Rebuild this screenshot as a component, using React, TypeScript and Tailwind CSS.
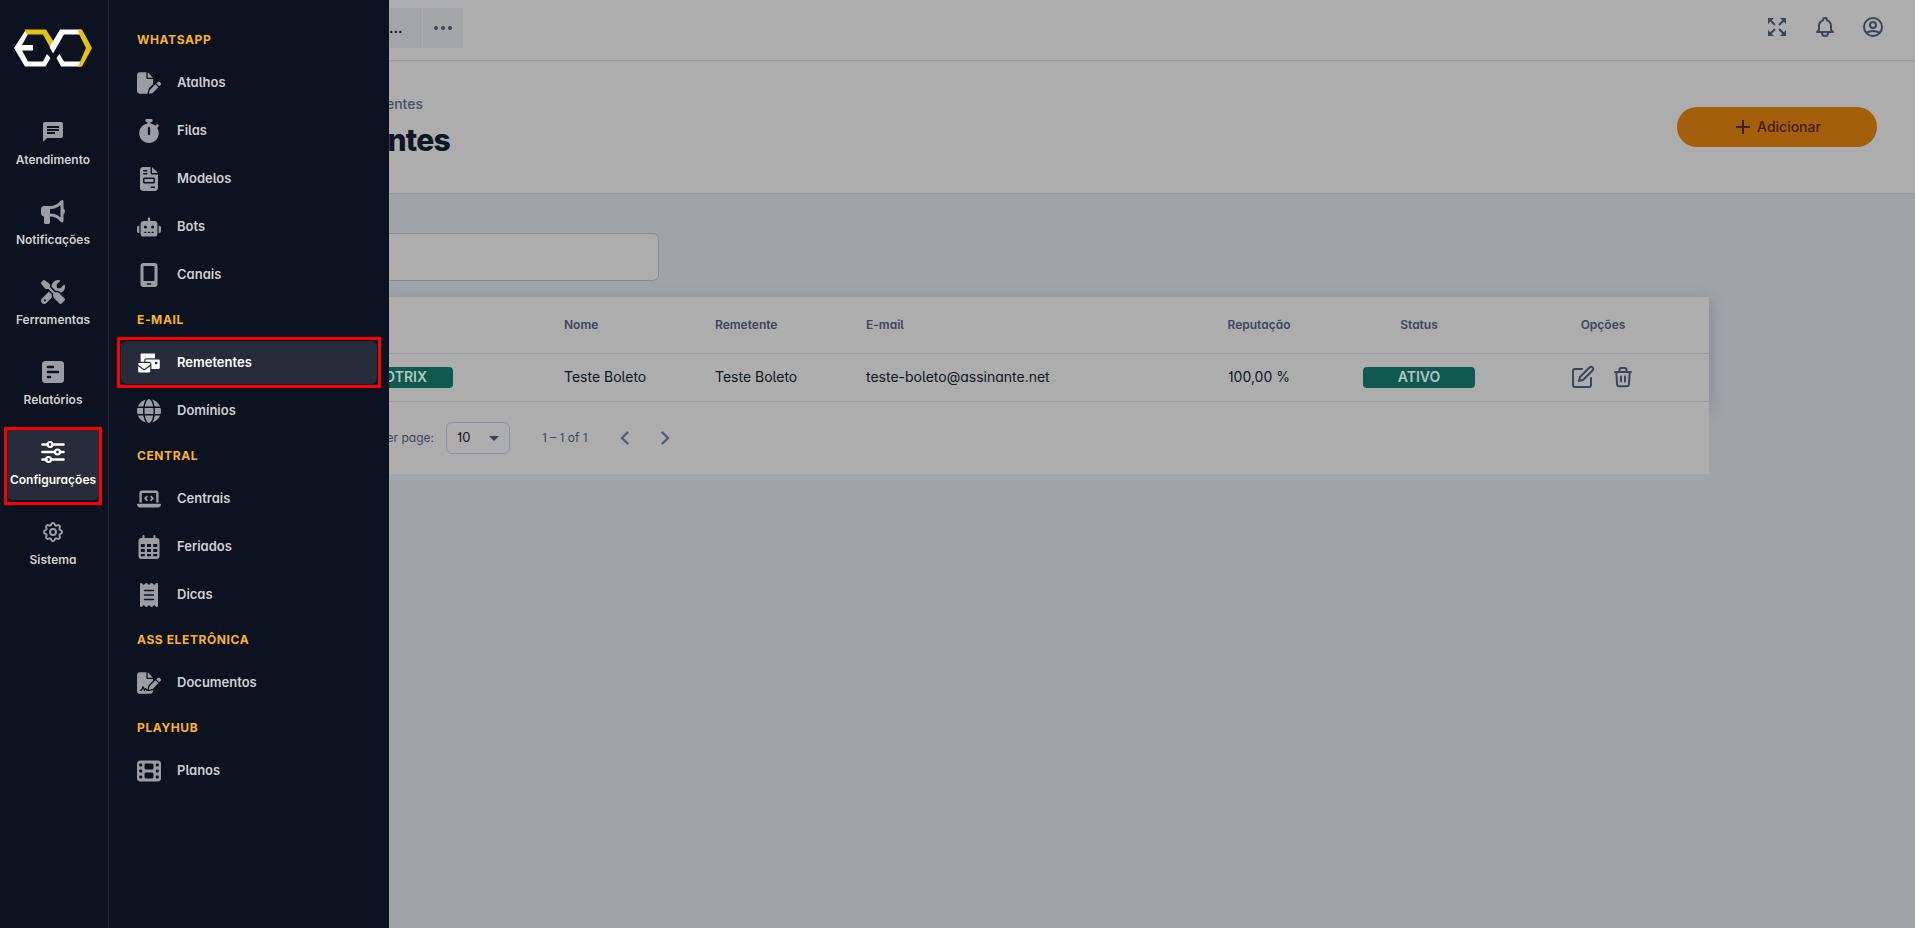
import { useState } from "react";
import type { ReactNode } from "react";
import type { IconType } from "react-icons";
import {
  FaBullhorn,
  FaFilePen,
  FaStopwatch,
  FaFileInvoice,
  FaRobot,
  FaGlobe,
  FaReceipt,
  FaFileSignature,
  FaFilm,
  FaLaptopCode,
  FaEnvelopesBulk,
  FaScrewdriverWrench,
} from "react-icons/fa6";
import {
  MdChat,
  MdChevronLeft,
  MdChevronRight,
  MdArrowDropDown,
} from "react-icons/md";
import { HiOutlineBell, HiOutlineUserCircle } from "react-icons/hi";

interface IconProps {
  className?: string;
}

interface MenuItem {
  label: string;
  icon: IconType | ((props: IconProps) => ReactNode);
}

interface MenuGroup {
  title: string;
  items: MenuItem[];
}

const Logo = () => (
  <svg viewBox="0 0 80 40" className="h-10 w-20" aria-label="EVO" role="img">
    <path d="M13 1.500 L1 20 L12 38.500 H32.500 L37.500 30 L34 26 L30 33.500 H15 L9 22.500 H20 V17 H9 L15 6 Z" fill="#fff" />
    <path d="M11.500 1.500 H33 L41.500 15 L38 21 L30 6.500 H14 Z" fill="#e5c30b" />
    <path d="M68 1.500 H47 L36.500 19 L40 25.500 L51 6.500 H68 Z M43.500 30 L48 38.500 H68 V33.500 H51 L46.500 26 Z" fill="#fff" />
    <path d="M66 1.500 H69 L79 20 L69 38.500 H65 L73 20 L65 4 Z" fill="#e5c30b" />
  </svg>
);

const ReportIcon = ({ className }: IconProps) => (
  <svg viewBox="0 0 24 24" className={className} fill="none">
    <rect x="1" y="1" width="22" height="22" rx="3.500" fill="currentColor" />
    <path d="M7 7h5M7 12h10M7 17h2" stroke="#0c121f" strokeWidth="2.600" strokeLinecap="round" />
  </svg>
);

const SlidersIcon = ({ className }: IconProps) => (
  <svg viewBox="0 0 24 24" className={className} fill="none" stroke="currentColor" strokeWidth="2.600" strokeLinecap="round">
    <path d="M1.500 4.500h5M11.500 4.500h11M1.500 12h12M19 12h3.500M1.500 19.500h4M10.500 19.500h12" />
    <circle cx="9" cy="4.500" r="2.500" strokeWidth="2.200" />
    <circle cx="16.500" cy="12" r="2.500" strokeWidth="2.200" />
    <circle cx="7.500" cy="19.500" r="2.500" strokeWidth="2.200" />
  </svg>
);

const GearIcon = ({ className }: IconProps) => (
  <svg viewBox="0 0 24 24" className={className} fill="none" stroke="currentColor" strokeWidth="2" strokeLinejoin="round">
    <path d="M10.300 4.300c.4-1.700 2.900-1.700 3.400 0a1.700 1.700 0 0 0 2.600 1.100c1.500-.9 3.300.8 2.400 2.400a1.700 1.700 0 0 0 1 2.500c1.800.4 1.800 2.900 0 3.400a1.700 1.700 0 0 0-1 2.600c.9 1.500-.9 3.300-2.400 2.400a1.700 1.700 0 0 0-2.600 1c-.5 1.800-3 1.800-3.400 0a1.700 1.700 0 0 0-2.600-1c-1.500.9-3.300-.9-2.400-2.400a1.700 1.700 0 0 0-1-2.600c-1.800-.5-1.800-3 0-3.400a1.700 1.700 0 0 0 1-2.600c-.9-1.500.9-3.300 2.400-2.400a1.700 1.700 0 0 0 2.600-1z" />
    <circle cx="12" cy="12" r="3" />
  </svg>
);

const PhoneIcon = ({ className }: IconProps) => (
  <svg viewBox="0 0 24 24" className={className} fill="currentColor" fillRule="evenodd">
    <path d="M6.500 0h11A3 3 0 0 1 20.500 3v18a3 3 0 0 1-3 3h-11a3 3 0 0 1-3-3V3a3 3 0 0 1 3-3zM6.500 3v15h11V3zM10.500 20.200a.8.8 0 0 0 0 1.600h3a.8.8 0 0 0 0-1.600z" />
  </svg>
);

const CalendarIcon = ({ className }: IconProps) => (
  <svg viewBox="0 0 24 24" className={className} fill="currentColor" fillRule="evenodd">
    <path d="M6.500 0a1 1 0 0 1 1 1v2h9V1a1 1 0 0 1 2 0v2h1A3 3 0 0 1 22.500 6v15a3 3 0 0 1-3 3h-15a3 3 0 0 1-3-3V6a3 3 0 0 1 3-3h1V1a1 1 0 0 1 1-1zM3.800 9v3h4V9zM10 9v3h4V9zM16.200 9v3h4V9zM3.800 14v3h4v-3zM10 14v3h4v-3zM16.200 14v3h4v-3zM3.800 19v2.200h4V19zM10 19v2.200h4V19zM16.200 19v2.200h4V19z" />
  </svg>
);

const ExpandIcon = ({ className }: IconProps) => (
  <svg viewBox="0 0 20 20" className={className} fill="none" stroke="currentColor" strokeWidth="2">
    <path d="M3 3l5 5M17 3l-5 5M3 17l5-5M17 17l-5-5" />
    <path d="M1 1h6L1 7zM19 1v6l-6-6zM1 19v-6l6 6zM19 19h-6l6-6z" fill="currentColor" stroke="none" />
  </svg>
);

const EditIcon = ({ className }: IconProps) => (
  <svg viewBox="0 0 24 24" className={className} fill="none" stroke="currentColor" strokeWidth="2" strokeLinecap="round" strokeLinejoin="round">
    <path d="M11 4H4a2 2 0 0 0-2 2v14a2 2 0 0 0 2 2h14a2 2 0 0 0 2-2v-7" />
    <path d="M18.500 2.500a2.120 2.120 0 0 1 3 3L12 15l-4 1 1-4z" />
  </svg>
);

const TrashIcon = ({ className }: IconProps) => (
  <svg viewBox="0 0 24 24" className={className} fill="none" stroke="currentColor" strokeWidth="2" strokeLinecap="round" strokeLinejoin="round">
    <path d="M4 7h16M8.500 7V4.500a1.500 1.500 0 0 1 1.500-1.500h4a1.500 1.500 0 0 1 1.500 1.500V7" />
    <path d="M5.300 7l.8 12.500a2 2 0 0 0 2 1.700h7.800a2 2 0 0 0 2-1.700L18.700 7M10 11.500v5M14 11.500v5" />
  </svg>
);

const mainMenu: MenuItem[] = [
  { label: "Atendimento", icon: MdChat },
  { label: "Notificações", icon: FaBullhorn },
  { label: "Ferramentas", icon: FaScrewdriverWrench },
  { label: "Relatórios", icon: ReportIcon },
  { label: "Configurações", icon: SlidersIcon },
  { label: "Sistema", icon: GearIcon },
];

const groups: MenuGroup[] = [
  {
    title: "WHATSAPP",
    items: [
      { label: "Atalhos", icon: FaFilePen },
      { label: "Filas", icon: FaStopwatch },
      { label: "Modelos", icon: FaFileInvoice },
      { label: "Bots", icon: FaRobot },
      { label: "Canais", icon: PhoneIcon },
    ],
  },
  {
    title: "E-MAIL",
    items: [
      { label: "Remetentes", icon: FaEnvelopesBulk },
      { label: "Domínios", icon: FaGlobe },
    ],
  },
  {
    title: "CENTRAL",
    items: [
      { label: "Centrais", icon: FaLaptopCode },
      { label: "Feriados", icon: CalendarIcon },
      { label: "Dicas", icon: FaReceipt },
    ],
  },
  { title: "ASS ELETRÔNICA", items: [{ label: "Documentos", icon: FaFileSignature }] },
  { title: "PLAYHUB", items: [{ label: "Planos", icon: FaFilm }] },
];

const MainNav = () => (
  <nav className="flex w-[109px] shrink-0 flex-col border-r border-[#242938] pr-0.5" aria-label="Principal">
    <a href="#inicio" className="mt-7 mb-[39px] flex justify-center">
      <Logo />
    </a>
    {mainMenu.map(({ label, icon: Icon }) => {
      const active = label === "Configurações";
      return (
        <a
          key={label}
          href={"#" + label}
          className={
            active
              ? "mx-1 mb-0.5 h-[78px] border-3 border-[#ff0000] pb-0.5 text-white"
              : "mx-1 mb-0.5 h-[78px] border-3 border-transparent pb-0.5 text-[#9b9da5]"
          }
        >
          <span
            className={
              active
                ? "flex h-full flex-col items-center gap-2 rounded-b-md bg-[#272b3a] pt-[10px]"
                : "flex h-full flex-col items-center gap-2 pt-[10px]"
            }
          >
            <Icon className="size-6" />
            <span className={active ? "text-xs font-semibold" : "text-xs font-semibold text-[#cfd0d3]"}>{label}</span>
          </span>
        </a>
      );
    })}
  </nav>
);

const SubNav = () => (
  <nav className="flex-1 px-2 pt-5" aria-label="Configurações">
    {groups.map((group) => (
      <section key={group.title} className="pb-px">
        <h2 className="flex h-[39px] items-center px-5 text-xs font-bold tracking-wider text-[#fbb31e]">
          {group.title}
        </h2>
        {group.items.map(({ label, icon: Icon }) => {
          if (label === "Remetentes") {
            return (
              <a key={label} href={"#" + label} className="-mt-0.5 -mb-px block h-[51px] border-3 border-[#ff0000] p-px">
                <span className="flex h-full items-center gap-4 rounded-md bg-[#272b3a] px-4 text-white">
                  <Icon className="size-6" />
                  <span className="text-[13px] font-semibold">{label}</span>
                </span>
              </a>
            );
          }
          return (
            <a key={label} href={"#" + label} className="flex h-12 items-center gap-4 px-5 text-[#9b9da5]">
              <Icon className="size-6" />
              <span className="text-[13px] font-semibold text-[#cfd0d3]">{label}</span>
            </a>
          );
        })}
      </section>
    ))}
  </nav>
);

const Header = () => (
  <header className="flex h-[61px] shrink-0 items-center border-b border-[#999a9b] pr-[30px] shadow-xs">
    <div className="-mt-1 flex gap-px">
      <button className="flex h-10 w-[33px] items-center bg-[#a3a5a7] text-sm font-semibold text-[#0f1624]">...</button>
      <button className="flex size-10 items-center justify-center gap-[3px] bg-[#a3a5a7]" aria-label="Mais">
        <span className="size-1 rounded-full bg-[#3c465a]" />
        <span className="size-1 rounded-full bg-[#3c465a]" />
        <span className="size-1 rounded-full bg-[#3c465a]" />
      </button>
    </div>
    <div className="-mt-1.5 ml-auto flex items-center gap-6 text-[#3c465a]">
      <button aria-label="Tela cheia" className="flex size-6 items-center justify-center">
        <ExpandIcon className="size-5" />
      </button>
      <button aria-label="Notificações">
        <HiOutlineBell className="size-6" />
      </button>
      <button aria-label="Conta">
        <HiOutlineUserCircle className="size-6" />
      </button>
    </div>
  </header>
);

const TitleBar = () => (
  <div className="flex h-[133px] shrink-0 items-center justify-between border-b border-[#93979d] pr-[38px]">
    <div>
      <p className="flex w-[34px] justify-end text-sm leading-5 font-medium text-[#465166]">entes</p>
      <h1 className="mt-1.5 flex w-[61px] justify-end text-3xl leading-10 font-extrabold tracking-tight text-[#0f1624]">
        ntes
      </h1>
    </div>
    <button className="flex h-10 w-[200px] items-center justify-center gap-1 rounded-full bg-[#a35f0a] text-sm font-medium text-[#4a1a0a]">
      <svg viewBox="0 0 20 20" className="size-5" stroke="currentColor" strokeWidth="2" aria-hidden="true">
        <path d="M10 3v14M3 10h14" />
      </svg>
      Adicionar
    </button>
  </div>
);

const SendersTable = () => {
  const [pageSize, setPageSize] = useState("10");

  return (
    <div className="mr-[206px]">
      <table className="w-full table-fixed bg-[#adadad] text-left text-sm text-[#0f1624] shadow-[0_5px_14px_0_rgba(80,80,100,0.45)]">
        <colgroup>
          <col className="w-[163px]" />
          <col className="w-[151px]" />
          <col className="w-[151px]" />
          <col />
          <col className="w-[120px]" />
          <col className="w-[200px]" />
          <col className="w-[190px]" />
        </colgroup>
        <thead>
          <tr className="h-14 border-b border-[#979aa3] text-xs text-[#3c465a]">
            <th />
            <th className="pl-3 font-semibold">Nome</th>
            <th className="pl-3 font-semibold">Remetente</th>
            <th className="pl-3 font-semibold">E-mail</th>
            <th className="text-center font-semibold">Reputação</th>
            <th className="text-center font-semibold">Status</th>
            <th className="pr-[22px] text-center font-semibold">Opções</th>
          </tr>
        </thead>
        <tbody>
          <tr className="h-12 border-b border-[#979aa3]">
            <td>
              <span className="flex h-[21px] w-16 items-center justify-end rounded-r-sm bg-[#0f594e] pr-[26px] font-semibold text-[#b9c4c1]">
                OTRIX
              </span>
            </td>
            <td className="pl-3">Teste Boleto</td>
            <td className="pl-3">Teste Boleto</td>
            <td className="pl-3">teste-boleto@assinante.net</td>
            <td className="text-center">100,00 %</td>
            <td>
              <span className="mx-auto flex h-[21px] w-28 items-center justify-center rounded-sm bg-[#0f594e] font-semibold text-[#b9c4c1]">
                ATIVO
              </span>
            </td>
            <td>
              <div className="flex items-center justify-center gap-4 pr-[22px] text-[#3c465a]">
                <button aria-label="Editar">
                  <EditIcon className="size-6" />
                </button>
                <button aria-label="Excluir">
                  <TrashIcon className="size-6" />
                </button>
              </div>
            </td>
          </tr>
        </tbody>
      </table>
      <div className="relative flex h-[72px] items-center bg-[#adadad] text-xs text-[#3c465a]">
        <label htmlFor="page-size" className="flex w-[45px] justify-end whitespace-nowrap">
          er page:
        </label>
        <div className="relative ml-3">
          <select
            id="page-size"
            value={pageSize}
            onChange={(e) => setPageSize(e.target.value)}
            className="h-8 w-16 appearance-none rounded-md border border-[#8b92a3] px-[10px] text-[13px] text-[#0f1624]"
          >
            <option>10</option>
            <option>25</option>
          </select>
          <MdArrowDropDown className="pointer-events-none absolute top-1 right-1 size-6" />
        </div>
        <span className="ml-8">1 – 1 of 1</span>
        <button aria-label="Página anterior" className="ml-6 text-[#526077]">
          <MdChevronLeft className="size-7" />
        </button>
        <button aria-label="Próxima página" className="ml-3 text-[#526077]">
          <MdChevronRight className="size-7" />
        </button>
      </div>
    </div>
  );
};

export default function App() {
  return (
    <div className="flex min-h-screen bg-[#adadad] font-['Inter',sans-serif]">
      <aside className="relative z-10 flex w-[389px] shrink-0 bg-[#0c121f] [font-feature-settings:'cv01','cv05','cv11']">
        <MainNav />
        <SubNav />
      </aside>
      <div className="flex min-w-0 flex-1 flex-col">
        <Header />
        <TitleBar />
        <main className="flex-1 bg-[#a0a4a7] pt-[39px] [font-feature-settings:'cv01','cv05','cv11']">
          <input
            type="text"
            aria-label="Pesquisar"
            className="mb-4 block h-12 w-[270px] rounded-r-md border border-l-0 border-[#868c98] bg-[#adadad] px-3"
          />
          <SendersTable />
        </main>
      </div>
    </div>
  );
}
